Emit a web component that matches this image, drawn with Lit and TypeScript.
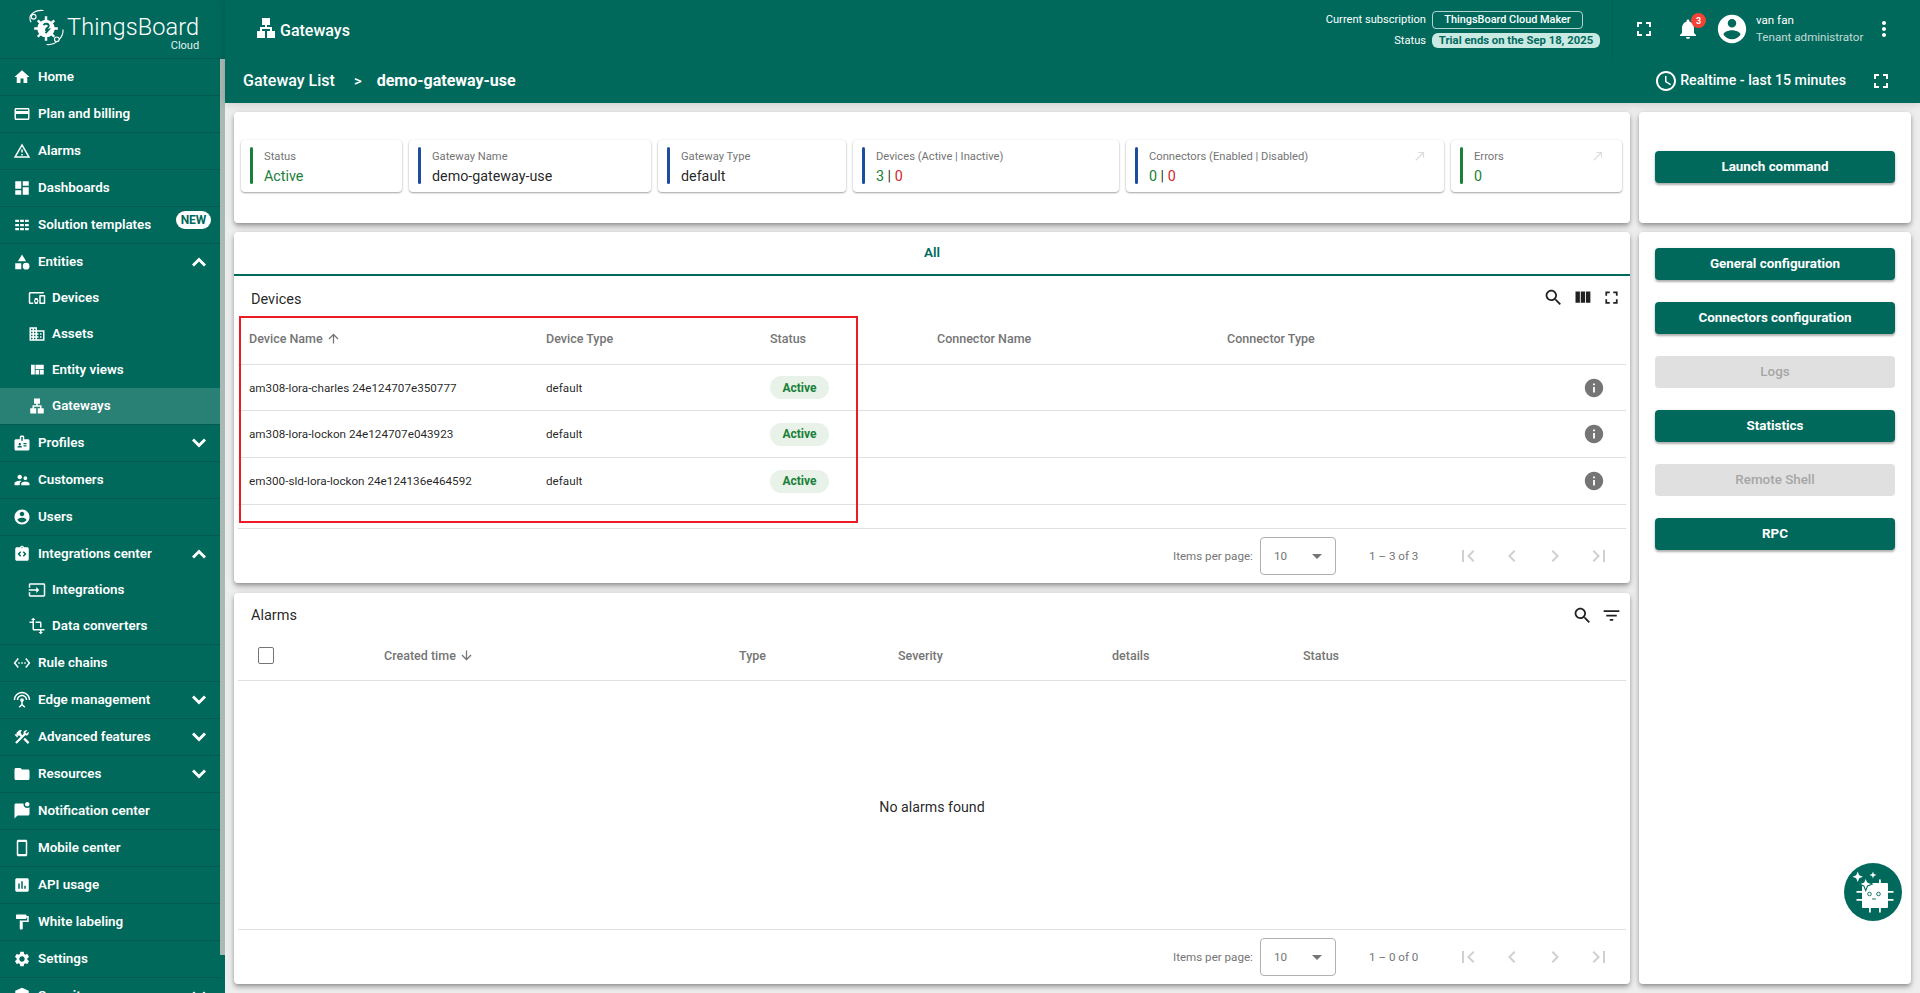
import { LitElement, html, css } from "lit";
import { customElement } from "lit/decorators.js";

const I: Record<string, string> = {
  home: "M10 20v-6h4v6h5v-8h3L12 3 2 12h3v8z",
  card: "M20 4H4c-1.11 0-1.99.89-1.99 2L2 18c0 1.11.89 2 2 2h16c1.11 0 2-.89 2-2V6c0-1.11-.89-2-2-2zm0 14H4v-6h16v6zm0-10H4V6h16v2z",
  warn: "M12 5.99L19.53 19H4.47L12 5.99M12 2L1 21h22L12 2zm1 14h-2v2h2v-2zm0-6h-2v4h2v-4z",
  dash: "M3 13h8V3H3v10zm0 8h8v-6H3v6zm10 0h8V11h-8v10zm0-18v6h8V3h-8z",
  tmpl: "M3 5h5v3H3zM9.5 5h5v3h-5zM16 5h5v3h-5zM3 10.5h5v3H3zM9.5 10.5h5v3h-5zM16 10.5h5v3h-5zM3 16h5v3H3zM9.5 16h5v3h-5zM16 16h5v3h-5z",
  cat: "M12 2l-5.5 9h11zM17.5 13a4.5 4.5 0 1 0 0 9 4.5 4.5 0 0 0 0-9zM3 13.5h8v8H3z",
  dev: "M3 6h18V4H3c-1.1 0-2 .9-2 2v12c0 1.1.9 2 2 2h4v-2H3V6zm10 6H9v1.78c-.61.55-1 1.33-1 2.22s.39 1.67 1 2.22V20h4v-1.78c.61-.55 1-1.34 1-2.22s-.39-1.67-1-2.22V12zm-2 5.5c-.83 0-1.5-.67-1.5-1.5s.67-1.5 1.5-1.5 1.5.67 1.5 1.5-.67 1.5-1.5 1.5zM22 8h-6c-.5 0-1 .5-1 1v10c0 .5.5 1 1 1h6c.5 0 1-.5 1-1V9c0-.5-.5-1-1-1zm-1 10h-4v-8h4v8z",
  dom: "M12 7V3H2v18h20V7H12zM6 19H4v-2h2v2zm0-4H4v-2h2v2zm0-4H4V9h2v2zm0-4H4V5h2v2zm4 12H8v-2h2v2zm0-4H8v-2h2v2zm0-4H8V9h2v2zm0-4H8V5h2v2zm10 12h-8v-2h2v-2h-2v-2h2v-2h-2V9h8v10zm-2-8h-2v2h2v-2zm0 4h-2v2h2v-2z",
  quilt: "M10 18h5v-6h-5v6zm-6 0h5V5H4v13zm12 0h5v-6h-5v6zM10 5v6h11V5H10z",
  lan: "M13 22h8v-7h-3v-4h-5V9h3V2H8v7h3v2H6v4H3v7h8v-7H8v-2h8v2h-3z",
  badge: "M20 7h-5V4c0-1.1-.9-2-2-2h-2c-1.1 0-2 .9-2 2v3H4c-1.1 0-2 .9-2 2v11c0 1.1.9 2 2 2h16c1.1 0 2-.9 2-2V9c0-1.1-.9-2-2-2zM9 12c.83 0 1.5.67 1.5 1.5S9.83 15 9 15s-1.5-.67-1.5-1.5S8.17 12 9 12zm3 6H6v-.75c0-1 2-1.5 3-1.5s3 .5 3 1.5V18zm1-9h-2V4h2v5zm5 7.5h-4V15h4v1.5zm0-3h-4V12h4v1.5z",
  sup: "M16.5 12c1.38 0 2.49-1.12 2.49-2.5S17.88 7 16.5 7C15.12 7 14 8.12 14 9.5s1.12 2.5 2.5 2.5zM9 11c1.66 0 2.99-1.34 2.99-3S10.66 5 9 5C7.34 5 6 6.34 6 8s1.34 3 3 3zm7.5 3c-1.83 0-5.5.92-5.5 2.75V19h11v-2.25c0-1.83-3.67-2.75-5.5-2.75zM9 13c-2.33 0-7 1.17-7 3.5V19h7v-2.25c0-.85.33-2.34 2.37-3.47C10.5 13.1 9.66 13 9 13z",
  acct: "M12 2C6.48 2 2 6.48 2 12s4.48 10 10 10 10-4.48 10-10S17.52 2 12 2zm0 3c1.66 0 3 1.34 3 3s-1.34 3-3 3-3-1.34-3-3 1.34-3 3-3zm0 14.2c-2.5 0-4.71-1.28-6-3.22.03-1.99 4-3.08 6-3.08 1.99 0 5.97 1.09 6 3.08-1.29 1.94-3.5 3.22-6 3.22z",
  integ: "M19 3h-4.18C14.4 1.84 13.3 1 12 1s-2.4.84-2.82 2H5c-1.1 0-2 .9-2 2v14c0 1.1.9 2 2 2h14c1.1 0 2-.9 2-2V5c0-1.1-.9-2-2-2zm-7-.25c.41 0 .75.34.75.75s-.34.75-.75.75-.75-.34-.75-.75.34-.75.75-.75zM11 14.17l-1.41 1.42L6 12l3.59-3.59L11 9.83 8.83 12 11 14.17zm3.41 1.42L13 14.17 15.17 12 13 9.83l1.41-1.42L18 12l-3.59 3.59z",
  input: "M21 3.01H3c-1.1 0-2 .9-2 2V9h2V4.99h18v14.03H3V15H1v4.01c0 1.1.9 1.98 2 1.98h18c1.1 0 2-.88 2-1.98v-14c0-1.11-.9-2-2-2zM11 16l4-4-4-4v3H1v2h10v3z",
  trans: "M22 18v-2H8V4h2L7 1 4 4h2v2H2v2h4v8c0 1.1.9 2 2 2h8v2h-2l3 3 3-3h-2v-2h4zM10 8h6v6h2V8c0-1.1-.9-2-2-2h-6v2z",
  rule: "M7.77 6.76L6.23 5.48.82 12l5.41 6.52 1.54-1.28L3.42 12l4.35-5.24zM7 13h2v-2H7v2zm10-2h-2v2h2v-2zm-6 2h2v-2h-2v2zm6.77-7.52l-1.54 1.28L20.58 12l-4.35 5.24 1.54 1.28L23.18 12l-5.41-6.52z",
  ant: "M12 5c-3.87 0-7 3.13-7 7h2c0-2.76 2.24-5 5-5s5 2.24 5 5h2c0-3.87-3.13-7-7-7zm1 9.29c.88-.39 1.5-1.26 1.5-2.29 0-1.38-1.12-2.5-2.5-2.5S9.5 10.62 9.5 12c0 1.02.62 1.9 1.5 2.29v3.3L7.59 21 9 22.41l3-3 3 3L16.41 21 13 17.59v-3.3zM12 1C5.93 1 1 5.93 1 12h2c0-4.97 4.03-9 9-9s9 4.03 9 9h2c0-6.07-4.93-11-11-11z",
  cons: "M13.783 15.172l2.121-2.121 5.996 5.996-2.121 2.121zM17.5 10c1.93 0 3.5-1.57 3.5-3.5 0-.58-.16-1.12-.41-1.6l-2.7 2.7-1.49-1.49 2.7-2.7c-.48-.25-1.02-.41-1.6-.41C15.57 3 14 4.57 14 6.5c0 .41.08.8.21 1.16l-1.85 1.85-1.78-1.78.71-.71-1.41-1.41L12 3.49c-1.17-1.17-3.07-1.17-4.24 0L4.22 7.03l1.41 1.41H2.81l-.71.71 3.54 3.54.71-.71V9.15l1.41 1.41.71-.71 1.78 1.78-7.41 7.41 2.12 2.12L16.34 9.79c.36.13.75.21 1.16.21z",
  folder: "M10 4H4c-1.1 0-1.99.9-1.99 2L2 18c0 1.1.9 2 2 2h16c1.1 0 2-.9 2-2V8c0-1.1-.9-2-2-2h-8l-2-2z",
  notif: "M22 6.98V16c0 1.1-.9 2-2 2H6l-4 4V4c0-1.1.9-2 2-2h10.1c-.06.32-.1.66-.1 1 0 2.76 2.24 5 5 5 1.13 0 2.16-.39 3-1.02zM16 3c0 1.66 1.34 3 3 3s3-1.34 3-3-1.34-3-3-3-3 1.34-3 3z",
  phone: "M17 1.01L7 1c-1.1 0-2 .9-2 2v18c0 1.1.9 2 2 2h10c1.1 0 2-.9 2-2V3c0-1.1-.9-1.99-2-1.99zM17 20H7V4h10v16z",
  chart: "M19 3H5c-1.1 0-2 .9-2 2v14c0 1.1.9 2 2 2h14c1.1 0 2-.9 2-2V5c0-1.1-.9-2-2-2zM9 17H7v-7h2v7zm4 0h-2V7h2v10zm4 0h-2v-4h2v4z",
  paint: "M18 4V3c0-.55-.45-1-1-1H5c-.55 0-1 .45-1 1v4c0 .55.45 1 1 1h12c.55 0 1-.45 1-1V6h1v4H9v11c0 .55.45 1 1 1h2c.55 0 1-.45 1-1v-9h8V4h-3z",
  gear: "M19.14 12.94c.04-.3.06-.61.06-.94 0-.32-.02-.64-.07-.94l2.03-1.58c.18-.14.23-.41.12-.61l-1.92-3.32c-.12-.22-.37-.29-.59-.22l-2.39.96c-.5-.38-1.03-.7-1.62-.94l-.36-2.54c-.04-.24-.24-.41-.48-.41h-3.84c-.24 0-.43.17-.47.41l-.36 2.54c-.59.24-1.13.57-1.62.94l-2.39-.96c-.22-.08-.47 0-.59.22L2.74 8.87c-.12.21-.08.47.12.61l2.03 1.58c-.05.3-.09.63-.09.94s.02.64.07.94l-2.03 1.58c-.18.14-.23.41-.12.61l1.92 3.32c.12.22.37.29.59.22l2.39-.96c.5.38 1.03.7 1.62.94l.36 2.54c.05.24.24.41.48.41h3.84c.24 0 .44-.17.47-.41l.36-2.54c.59-.24 1.13-.56 1.62-.94l2.39.96c.22.08.47 0 .59-.22l1.92-3.32c.12-.22.07-.47-.12-.61l-2.01-1.58zM12 15.6c-1.98 0-3.6-1.62-3.6-3.6s1.62-3.6 3.6-3.6 3.6 1.62 3.6 3.6-1.62 3.6-3.6 3.6z",
  sec: "M12 1L3 5v6c0 5.55 3.84 10.74 9 12 5.16-1.26 9-6.45 9-12V5l-9-4z",
  up: "M12 7.6l-7 7 2 2 5-5 5 5 2-2z",
  down: "M12 16.4l7-7-2-2-5 5-5-5-2 2z",
  full: "M7 14H5v5h5v-2H7v-3zm-2-4h2V7h3V5H5v5zm12 7h-3v2h5v-5h-2v3zM14 5v2h3v3h2V5h-5z",
  bell: "M12 22c1.1 0 2-.9 2-2h-4c0 1.1.89 2 2 2zm6-6v-5c0-3.07-1.64-5.64-4.5-6.32V4c0-.83-.67-1.5-1.5-1.5s-1.5.67-1.5 1.5v.68C7.63 5.36 6 7.92 6 11v5l-2 2v1h16v-1l-2-2z",
  more: "M12 8c1.1 0 2-.9 2-2s-.9-2-2-2-2 .9-2 2 .9 2 2 2zm0 2c-1.1 0-2 .9-2 2s.9 2 2 2 2-.9 2-2-.9-2-2-2zm0 6c-1.1 0-2 .9-2 2s.9 2 2 2 2-.9 2-2-.9-2-2-2z",
  clock: "M11.99 2C6.47 2 2 6.48 2 12s4.47 10 9.99 10C17.52 22 22 17.52 22 12S17.52 2 11.99 2zM12 20c-4.42 0-8-3.58-8-8s3.58-8 8-8 8 3.58 8 8-3.58 8-8 8zm.5-13H11v6l5.25 3.15.75-1.23-4.5-2.67z",
  search: "M15.5 14h-.79l-.28-.27C15.41 12.59 16 11.11 16 9.5 16 5.91 13.09 3 9.5 3S3 5.91 3 9.5 5.91 16 9.5 16c1.61 0 3.09-.59 4.23-1.57l.27.28v.79l5 4.99L20.49 19l-4.99-5zm-6 0C7.01 14 5 11.99 5 9.5S7.01 5 9.5 5 14 7.01 14 9.5 11.99 14 9.5 14z",
  cols: "M10 18h5V5h-5v13zm-6 0h5V5H4v13zM16 5v13h5V5h-5z",
  filter: "M10 18h4v-2h-4v2zM3 6v2h18V6H3zm3 7h12v-2H6v2z",
  info: "M12 2C6.48 2 2 6.48 2 12s4.48 10 10 10 10-4.48 10-10S17.52 2 12 2zm1 15h-2v-6h2v6zm0-8h-2V7h2v2z",
  aup: "M4 12l1.41 1.41L11 7.83V20h2V7.83l5.58 5.59L20 12l-8-8-8 8z",
  adn: "M20 12l-1.41-1.41L13 16.17V4h-2v12.17l-5.58-5.59L4 12l8 8 8-8z",
  ne: "M9 5v2h6.59L4 18.59 5.41 20 17 8.41V15h2V5z",
  first: "M18.41 16.59L13.82 12l4.59-4.59L17 6l-6 6 6 6zM6 6h2v12H6z",
  prev: "M15.41 7.41L14 6l-6 6 6 6 1.41-1.41L10.83 12z",
  next: "M10 6L8.59 7.41 13.17 12l-4.58 4.59L10 18l6-6z",
  last: "M5.59 7.41L10.18 12l-4.59 4.59L7 18l6-6-6-6zM16 6h2v12h-2z",
};

const ic = (n: string, cls = "") =>
  html`<svg class="ic ${cls}" viewBox="0 0 24 24"><path d=${I[n]}></path></svg>`;

type Nav = { i: string; t: string; chev?: "up" | "down"; isNew?: boolean; kids?: { i: string; t: string; on?: boolean }[] };
const NAV: Nav[] = [
  { i: "home", t: "Home" },
  { i: "card", t: "Plan and billing" },
  { i: "warn", t: "Alarms" },
  { i: "dash", t: "Dashboards" },
  { i: "tmpl", t: "Solution templates", isNew: true },
  { i: "cat", t: "Entities", chev: "up", kids: [
    { i: "dev", t: "Devices" }, { i: "dom", t: "Assets" }, { i: "quilt", t: "Entity views" }, { i: "lan", t: "Gateways", on: true },
  ] },
  { i: "badge", t: "Profiles", chev: "down" },
  { i: "sup", t: "Customers" },
  { i: "acct", t: "Users" },
  { i: "integ", t: "Integrations center", chev: "up", kids: [
    { i: "input", t: "Integrations" }, { i: "trans", t: "Data converters" },
  ] },
  { i: "rule", t: "Rule chains" },
  { i: "ant", t: "Edge management", chev: "down" },
  { i: "cons", t: "Advanced features", chev: "down" },
  { i: "folder", t: "Resources", chev: "down" },
  { i: "notif", t: "Notification center" },
  { i: "phone", t: "Mobile center" },
  { i: "chart", t: "API usage" },
  { i: "paint", t: "White labeling" },
  { i: "gear", t: "Settings" },
  { i: "sec", t: "Security", chev: "down" },
];

const DEVICES = [
  "am308-lora-charles 24e124707e350777",
  "am308-lora-lockon 24e124707e043923",
  "em300-sld-lora-lockon 24e124136e464592",
];

@customElement("app-root")
export class AppRoot extends LitElement {
  static styles = css`
    :host { display: flex; width: 1920px; height: 993px; overflow: hidden; background: #eeeeee; font-family: Roboto, "Liberation Sans", sans-serif; color: rgba(0,0,0,.87); position: relative; }
    * { box-sizing: border-box; }
    .ic { width: 24px; height: 24px; fill: currentColor; flex: none; display: block; }

    .side { width: 225px; flex: none; background: #00695c; color: #fff; position: relative; overflow: hidden; height: 993px; }
    .logo { height: 59px; border-bottom: 1px solid rgba(0,0,0,.14); width: 220px; display: flex; padding: 9px 0 0 27px; position: relative; }
    .logo svg { width: 37px; height: 37px; flex: none; }
    .brand { margin-left: 3px; display: flex; flex-direction: column; align-items: flex-end; }
    .brand b { font-weight: 300; font-size: 23.5px; line-height: 30px; margin-top: 3px; letter-spacing: .1px; }
    .brand span { font-size: 11px; line-height: 11px; margin-top: -2px; font-weight: 400; opacity: .9; }
    .group { width: 220px; border-bottom: 1px solid rgba(0,0,0,.14); }
    .row { height: 36px; display: flex; align-items: center; padding-left: 13px; font-size: 13.4px; font-weight: 600; position: relative; }
    .row > span:not(.new) { margin-top: -1px; }
    .row .ic { width: 18px; height: 18px; margin-right: 7px; }
    .row.sub { padding-left: 28px; }
    .row.sub .ic { width: 18px; height: 18px; margin-right: 6px; }
    .row.on { background: rgba(255,255,255,.16); }
    .row .chev { position: absolute; left: 187px; top: 6px; width: 24px; height: 24px; margin: 0; }
    .new { position: absolute; left: 176px; top: 4px; width: 35px; height: 18px; border-radius: 9px; background: #fff; color: #00695c; font-size: 12px; font-weight: 700; display: flex; align-items: center; justify-content: center; }
    .thumb { position: absolute; left: 220px; top: 59px; width: 5px; height: 896px; background: #a9b9b4; }

    .main { flex: 1; min-width: 0; display: flex; flex-direction: column; }
    .head { height: 103px; background: #00695c; color: #fff; flex: none; box-shadow: 0 1px 8px rgba(0,0,0,.16); z-index: 1; }
    .bar1 { height: 58px; display: flex; align-items: center; padding-left: 28px; }
    .title { display: flex; align-items: center; font-size: 16px; font-weight: 500; gap: 3px; }
    .title .ic { margin: -2px 0 0 1px; }
    .title span { margin: 2px 0 0 -1px; }
    .sub-info { margin-left: auto; display: grid; grid-template-columns: auto auto; column-gap: 6px; row-gap: 4px; align-items: center; justify-items: end; font-size: 11.1px; margin-right: 12px; }
    .plan { justify-self: start; height: 18px; width: 151px; border: 1px solid rgba(255,255,255,.7); border-radius: 4px; display: flex; align-items: center; justify-content: center; font-weight: 500; font-size: 10.9px; }
    .trial { justify-self: start; height: 15px; width: 168px; border-radius: 6px; background: #c9eae3; color: #00695c; display: flex; align-items: center; justify-content: center; font-weight: 700; font-size: 11.3px; }
    .sep { width: 1px; height: 58px; background: rgba(0,0,0,.08); }
    .m19 { margin-left: 19px; }
    .bell { position: relative; margin-left: 20px; }
    .count { position: absolute; left: 15px; top: -4px; width: 15px; height: 15px; border-radius: 50%; background: #f44336; color: #fff; font-size: 9px; font-weight: 700; display: flex; align-items: center; justify-content: center; }
    .avatar { width: 34px; height: 34px; margin-left: 15px; }
    .user { margin-left: 7px; font-size: 11.6px; line-height: 17px; width: 116px; flex: none; white-space: nowrap; }
    .user div + div { opacity: .75; }
    .more { margin-right: 24px; }
    .bar2 { height: 45px; display: flex; align-items: center; padding: 0 27px 0 18px; font-size: 16px; font-weight: 500; }
    .crumb-sep { margin: 0 15px 0 19px; font-size: 15px; }
    .crumb-b { font-weight: 700; }
    .rt { margin-left: auto; display: flex; align-items: center; gap: 2px; font-size: 14.2px; }
    .rt span { margin-top: -1px; }
    .rt .ic { width: 24px; height: 24px; }
    .rt + .ic { margin-left: 23px; }

    .content { flex: 1; min-height: 0; padding: 9px; display: grid; grid-template-columns: 1396px 272px; grid-template-rows: 111px 752px; gap: 9px; }
    .card { background: #fff; border-radius: 4px; box-shadow: 0 2px 4px -1px rgba(0,0,0,.3), 0 4px 5px rgba(0,0,0,.14), 0 1px 10px rgba(0,0,0,.1); }
    .stats { display: grid; grid-template-columns: 161px 242px 188px 266px 318px 171px; gap: 7px; padding: 28px 0 0 7px; }
    .stat { height: 52px; background: #fff; border-radius: 4px; box-shadow: 0 1px 2px rgba(0,0,0,.35), 0 0 3px rgba(0,0,0,.06); display: flex; padding: 7px 0 8px 9px; position: relative; }
    .stat i { width: 3px; border-radius: 2px; background: #1c4e9c; flex: none; }
    .stat i.g { background: #198038; }
    .stat > div { margin-left: 11px; }
    .lbl { font-size: 11.2px; line-height: 14px; color: #757575; margin-top: 3px; }
    .val { font-size: 14.3px; line-height: 20px; margin-top: 2px; }
    .g-t { color: #198038; }
    .r-t { color: #d12730; }
    .stat .ne { position: absolute; right: 17px; top: 9px; width: 14px; height: 14px; color: #dcdcdc; }

    .col { display: grid; grid-template-rows: 351px 391px; gap: 10px; grid-row: 2; grid-column: 1; }
    .panel { position: relative; display: flex; flex-direction: column; padding: 0 4px; }
    .tab { margin: 0 -4px; height: 44px; border-bottom: 2px solid #00695c; display: flex; align-items: center; justify-content: center; font-size: 13.5px; font-weight: 600; color: #00695c; padding-bottom: 2px; }
    .tbar { height: 40px; display: flex; align-items: center; padding: 0 0 0 13px; font-size: 14.5px; }
    .tbar > span { margin-top: 7px; }
    .tools { margin-left: auto; display: flex; gap: 8px; padding: 4px 4px 0 0; }
    .tools .ic { width: 21px; height: 21px; }
    .grid { display: grid; grid-template-columns: 297px 224px 167px 290px 1fr; padding-left: 11px; align-items: center; border-bottom: 1px solid #e0e0e0; }
    .hrow { height: 49px; font-size: 12.5px; font-weight: 500; color: #757575; padding-bottom: 2px; }
    .drow { height: 47px; font-size: 11.7px; position: relative; }
    .drow:last-of-type { height: 46px; }
    .spacer { height: 24px; border-bottom: 1px solid #e0e0e0; }
    .sort { display: inline-flex; align-items: center; gap: 3px; }
    .sort .ic { width: 15px; height: 15px; }
    .chip { width: 59px; height: 23px; border-radius: 12px; background: #e8f2e9; color: #198038; font-size: 12px; font-weight: 700; display: flex; align-items: center; justify-content: center; }
    .inf { position: absolute; left: 1344.5px; top: 12px; width: 22px; height: 22px; color: #757575; }
    .pager { margin-top: auto; height: 54px; display: flex; align-items: center; font-size: 11.6px; color: #757575; }
    .ipp { margin-left: 935px; width: 80px; white-space: nowrap; }
    .sel { margin-left: 7px; width: 76px; height: 38px; border: 1px solid #b0b0b0; border-radius: 4px; display: flex; align-items: center; padding-left: 13px; position: relative; }
    .sel::after { content: ""; position: absolute; right: 13px; top: 16px; border: 5px solid transparent; border-top-color: #757575; border-bottom-width: 0; }
    .range { margin-left: 33px; width: 87px; }
    .pg { display: flex; gap: 19.5px; color: #d0d0d0; }
    .pg .ic { width: 24px; height: 24px; }
    .redbox { position: absolute; left: 5px; top: 84px; width: 619px; height: 207px; border: 2px solid #ed1c24; pointer-events: none; }

    .tbar.al { height: 44px; }
    .tbar.al > span { margin-top: 0; }
    .tbar.al .tools { padding-top: 0; }
    .agrid { display: grid; grid-template-columns: 126px 355px 159px 214px 191px 1fr; padding: 0 0 6px 20px; height: 44px; align-items: center; border-bottom: 1px solid #e0e0e0; font-size: 12.5px; font-weight: 500; color: #757575; }
    .cb { width: 16px; height: 17px; border: 1.5px solid #757575; border-radius: 2px; }
    .empty { flex: 1; display: flex; align-items: center; justify-content: center; font-size: 14.2px; border-bottom: 1px solid #e0e0e0; padding-top: 4px; }

    .rcard { padding: 39px 16px 0; }
    .rcol { grid-row: 2; grid-column: 2; padding: 16px 16px 0; display: flex; flex-direction: column; gap: 22px; }
    .btn { height: 32px; border-radius: 4px; background: #00695c; color: #fff; font-size: 13.4px; font-weight: 700; display: flex; align-items: center; justify-content: center; padding-bottom: 2px; box-shadow: 0 2px 2px rgba(0,0,0,.25), 0 1px 4px rgba(0,0,0,.12); }
    .btn.off { background: #e0e0e0; color: #a6a6a6; box-shadow: none; font-weight: 500; }
    .fab { position: absolute; left: 1844px; top: 863px; width: 58px; height: 58px; border-radius: 50%; background: #00695c; }
    .fab svg { width: 58px; height: 58px; display: block; }
  `;

  private nav(n: Nav) {
    const row = html`<div class="row">
      ${ic(n.i)}<span>${n.t}</span>
      ${n.isNew ? html`<span class="new">NEW</span>` : ""}
      ${n.chev ? ic(n.chev, "chev") : ""}
    </div>`;
    return html`<div class="group">
      ${row}
      ${(n.kids ?? []).map(
        (k) => html`<div class="row sub ${k.on ? "on" : ""}">${ic(k.i)}<span>${k.t}</span></div>`
      )}
    </div>`;
  }

  private pager(range: string) {
    return html`<div class="pager">
      <span class="ipp">Items per page:</span>
      <div class="sel">10</div>
      <span class="range">${range}</span>
      <div class="pg">${ic("first")}${ic("prev")}${ic("next")}${ic("last")}</div>
    </div>`;
  }

  private stat(label: string, body: unknown, green = false, ne = false) {
    return html`<div class="stat">
      <i class=${green ? "g" : ""}></i>
      <div><div class="lbl">${label}</div><div class="val">${body}</div></div>
      ${ne ? ic("ne", "ne") : ""}
    </div>`;
  }

  render() {
    return html`
      <aside class="side">
        <div class="logo">
          <svg viewBox="0 0 36 36" fill="none" stroke="#fff" stroke-width="1.1">
            <path d="M4 13 C2 9 3 6 5 4.5 C8 2 12 1 16 1.5"></path>
            <circle cx="6.5" cy="7.5" r="2.3" fill="#00695c"></circle>
            <path d="M35 20 C35.5 25 33 28 31 30 C27 34 23 35 19 34.5"></path>
            <circle cx="29" cy="29.5" r="2.3" fill="#00695c"></circle>
            <g stroke-width="2.4"><path d="M18.5 7v24M7 19h23M10.5 11l16 16M26.5 11l-16 16"></path></g>
            <circle cx="18.5" cy="19" r="8.5" fill="#fff" stroke="none"></circle>
            <path d="M16.2 15.8c.9-2.3 5-1.8 5 .7 0 1.8-2.7 1.8-2.7 3.8l2.7-.4-3.2 3.6" stroke="#00695c" stroke-width="1.8"></path>
          </svg>
          <div class="brand"><b>ThingsBoard</b><span>Cloud</span></div>
        </div>
        ${NAV.map((n) => this.nav(n))}
        <div class="thumb"></div>
      </aside>

      <div class="main">
        <header class="head">
          <div class="bar1">
            <div class="title">${ic("lan")}<span>Gateways</span></div>
            <div class="sub-info">
              <span>Current subscription</span><span class="plan">ThingsBoard Cloud Maker</span>
              <span>Status</span><span class="trial">Trial ends on the Sep 18, 2025</span>
            </div>
            <div class="sep"></div>
            <span class="m19">${ic("full")}</span>
            <span class="bell">${ic("bell")}<span class="count">3</span></span>
            <svg class="ic avatar" viewBox="0 0 24 24"><path d=${I.acct}></path></svg>
            <div class="user"><div>van fan</div><div>Tenant administrator</div></div>
            <span class="more">${ic("more")}</span>
          </div>
          <div class="bar2">
            <span>Gateway List</span><span class="crumb-sep">&gt;</span><span class="crumb-b">demo-gateway-use</span>
            <div class="rt">${ic("clock")}<span>Realtime - last 15 minutes</span></div>
            ${ic("full")}
          </div>
        </header>

        <div class="content">
          <section class="card stats">
            ${this.stat("Status", html`<span class="g-t">Active</span>`, true)}
            ${this.stat("Gateway Name", "demo-gateway-use")}
            ${this.stat("Gateway Type", "default")}
            ${this.stat("Devices (Active | Inactive)", html`<span class="g-t">3</span> | <span class="r-t">0</span>`)}
            ${this.stat("Connectors (Enabled | Disabled)", html`<span class="g-t">0</span> | <span class="r-t">0</span>`, false, true)}
            ${this.stat("Errors", html`<span class="g-t">0</span>`, true, true)}
          </section>
          <section class="card rcard"><div class="btn">Launch command</div></section>

          <div class="col">
            <section class="card panel">
              <div class="tab">All</div>
              <div class="tbar"><span>Devices</span>
                <div class="tools">${ic("search")}${ic("cols")}${ic("full")}</div>
              </div>
              <div class="grid hrow">
                <span class="sort">Device Name ${ic("aup")}</span><span>Device Type</span><span>Status</span><span>Connector Name</span><span>Connector Type</span>
              </div>
              ${DEVICES.map(
                (d) => html`<div class="grid drow">
                  <span>${d}</span><span>default</span><span class="chip">Active</span><span></span><span></span>
                  ${ic("info", "inf")}
                </div>`
              )}
              <div class="spacer"></div>
              ${this.pager("1 – 3 of 3")}
              <div class="redbox"></div>
            </section>

            <section class="card panel">
              <div class="tbar al"><span>Alarms</span>
                <div class="tools">${ic("search")}${ic("filter")}</div>
              </div>
              <div class="agrid">
                <div class="cb"></div>
                <span class="sort">Created time ${ic("adn")}</span><span>Type</span><span>Severity</span><span>details</span><span>Status</span>
              </div>
              <div class="empty">No alarms found</div>
              ${this.pager("1 – 0 of 0")}
            </section>
          </div>

          <section class="card rcol">
            <div class="btn">General configuration</div>
            <div class="btn">Connectors configuration</div>
            <div class="btn off">Logs</div>
            <div class="btn">Statistics</div>
            <div class="btn off">Remote Shell</div>
            <div class="btn">RPC</div>
          </section>
        </div>
      </div>

      <div class="fab">
        <svg viewBox="0 0 58 58">
          <g fill="#fff">
            <rect x="18" y="20" width="26" height="25" rx="1"></rect>
            <path d="M12.5 28h5.5v1.8h-5.5zM12.5 36h5.5v1.8h-5.5zM44 28h5.5v1.8H44zM44 36h5.5v1.8H44zM25 45h1.8v4.5H25zM35 45h1.8v4.5H35zM35 16.500h1.800V20H35z"></path>
            <path d="M13.700 8.500l1.500 3.700 3.700 1.500-3.700 1.500-1.500 3.700-1.500-3.700-3.700-1.500 3.700-1.500z"></path>
            <path d="M29 8.500l.9 2.600 2.600.9-2.600.9-.9 2.600-.9-2.600-2.600-.9 2.600-.9z"></path>
            <path d="M21.700 14.500l1.900 4.600 4.600 1.900-4.600 1.900-1.900 4.600-1.900-4.600-4.600-1.900 4.600-1.900z" stroke="#00695c" stroke-width="1.100"></path>
          </g>
          <g fill="none" stroke="#00695c" stroke-width=".9">
            <circle cx="25.500" cy="31" r="1.800"></circle><circle cx="34.500" cy="31" r="1.800"></circle>
            <path d="M28 36h4"></path>
          </g>
        </svg>
      </div>
    `;
  }
}
